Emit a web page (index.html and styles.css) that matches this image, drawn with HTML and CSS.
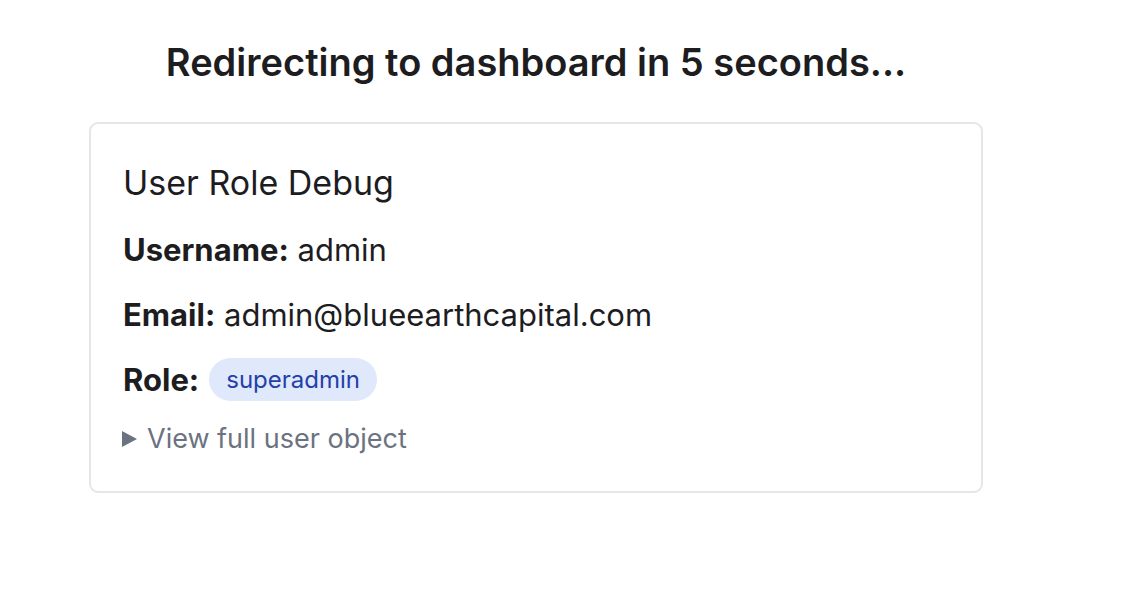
FILE: index.html
```html
<!DOCTYPE html>
<html lang="en">
<head>
<meta charset="utf-8">
<title>Redirecting</title>
<link rel="stylesheet" href="styles.css">
</head>
<body>
<main class="page">
  <h1 class="redirect">Redirecting to dashboard in 5 seconds...</h1>
  <section class="card">
    <h2 class="card-title">User Role Debug</h2>
    <p class="row"><strong>Username:</strong> admin</p>
    <p class="row"><strong>Email:</strong> admin@blueearthcapital.com</p>
    <p class="row role-row"><strong>Role:</strong> <span class="badge">superadmin</span></p>
    <details class="more">
      <summary>View full user object</summary>
    </details>
  </section>
</main>
</body>
</html>
```

FILE: styles.css
```css
html, body {
  margin: 0;
  padding: 0;
  background: #ffffff;
}

body {
  font-family: Inter, "Noto Sans", "Liberation Sans", sans-serif;
  color: #1d1d1f;
}

.page {
  width: 894px;
  margin-left: 89px;
  padding-top: 38px;
  display: flex;
  flex-direction: column;
}

.redirect {
  margin: 0;
  font-size: 38px;
  font-weight: 600;
  line-height: 48px;
  text-align: center;
}

.card {
  margin-top: 36px;
  border: 2px solid #e5e5ea;
  border-radius: 9px;
  padding: 35px 32px 36px;
  display: flex;
  flex-direction: column;
}

.card-title {
  margin: 0;
  font-size: 34px;
  font-weight: 400;
  line-height: 48px;
}

.row {
  margin: 23px 0 0;
  font-size: 31px;
  line-height: 40px;
}

.row + .row {
  margin-top: 25px;
}

.row strong {
  font-weight: 700;
}

.role-row {
  display: flex;
  align-items: center;
  gap: 10px;
}

.row.role-row {
  margin-top: 23px;
}

.badge {
  display: inline-block;
  background: #dfe9fb;
  color: #2540a8;
  font-size: 24px;
  line-height: 43px;
  padding: 0 17px;
  border-radius: 22px;
}

.more {
  margin-top: 22px;
  font-size: 27px;
  line-height: 32px;
  color: #6b7280;
}

.more summary {
  cursor: pointer;
  list-style: none;
  display: flex;
  align-items: center;
}

.more summary::-webkit-details-marker {
  display: none;
}

.more summary::before {
  content: "";
  width: 0;
  height: 0;
  border-left: 15px solid #6b7280;
  border-top: 8px solid transparent;
  border-bottom: 8px solid transparent;
  margin-left: -1px;
  margin-right: 10px;
}
```
